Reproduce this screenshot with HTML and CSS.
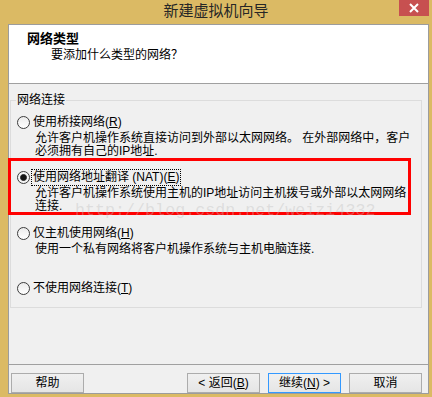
FILE: index.html
```html
<!DOCTYPE html>
<html lang="zh">
<head>
    <meta charset="UTF-8">
    <title>新建虚拟机向导</title>
    <link rel="stylesheet" href="styles.css">
</head>
<body>
    <div class="window">
        <div class="titlebar">
            <span></span>
            <div class="title">新建虚拟机向导</div>
            <div class="close">
                <svg width="10" height="10" viewBox="0 0 10 10">
                    <path d="M1 1 L9 9 M9 1 L1 9" stroke="#fff" stroke-width="2" fill="none"/>
                </svg>
            </div>
        </div>

        <div class="client">
            <div class="header">
                <h1>网络类型</h1>
                <p>要添加什么类型的网络？</p>
            </div>

            <div class="main">
                <fieldset class="group">
                    <legend>网络连接</legend>
                    <div class="options">
                        <div class="option">
                            <div class="opt-head">
                                <span class="radio"></span>
                                <span class="opt-label">使用桥接网络(<u>R</u>)</span>
                            </div>
                            <p class="opt-desc">允许客户机操作系统直接访问到外部以太网网络。 在外部网络中，客户<br>必须拥有自己的IP地址.</p>
                        </div>
                        <div class="option nat">
                            <div class="opt-head">
                                <span class="radio on"></span>
                                <span class="opt-label focus">使用网络地址翻译 (NAT)(<u>E</u>)</span>
                            </div>
                            <p class="opt-desc">允许客户机操作系统使用主机的IP地址访问主机拨号或外部以太网网络<br>连接.</p>
                        </div>
                        <div class="option">
                            <div class="opt-head">
                                <span class="radio"></span>
                                <span class="opt-label">仅主机使用网络(<u>H</u>)</span>
                            </div>
                            <p class="opt-desc">使用一个私有网络将客户机操作系统与主机电脑连接.</p>
                        </div>
                        <div class="option last">
                            <div class="opt-head">
                                <span class="radio"></span>
                                <span class="opt-label">不使用网络连接(<u>T</u>)</span>
                            </div>
                        </div>
                    </div>
                </fieldset>
            </div>

            <div class="footer">
                <button class="btn">帮助</button>
                <div class="btn-group">
                    <button class="btn">&lt; 返回(<u>B</u>)</button>
                    <button class="btn default">继续(<u>N</u>) &gt;</button>
                    <button class="btn">取消</button>
                </div>
            </div>
        </div>

        <!-- 标注框和水印 -->
        <div class="mark"></div>
        <div class="watermark">http://blog.csdn.net/weizi4332</div>
    </div>
</body>
</html>
```

FILE: styles.css
```css
/* 全局样式 */
body {
    margin: 0;
    font-family: 'Liberation Sans', 'Noto Sans CJK SC', sans-serif;
    font-size: 12px;
    color: #000;
}

/* 窗口 */
.window {
    position: relative;
    width: 432px;
    height: 397px;
    background-color: #dbba64;
    display: flex;
    flex-direction: column;
    overflow: hidden;
}

/* 标题栏 */
.titlebar {
    height: 25px;
    display: grid;
    grid-template-columns: 1fr auto 1fr;
    align-items: start;
}

.title {
    font-size: 15px;
    line-height: 21px;
    color: #262626;
}

.close {
    justify-self: end;
    margin-right: 3px;
    width: 30px;
    height: 16px;
    background-color: #c75050;
    display: flex;
    justify-content: center;
    align-items: center;
}

/* 客户区 */
.client {
    flex: 1;
    margin: 0 3px 3px 8px;
    border: 1px solid #9c9c9c;
    background-color: #f0f0f0;
    display: flex;
    flex-direction: column;
}

.header {
    height: 52px;
    background: #fff;
    border-bottom: 1px solid #a0a0a0;
    padding: 6px 0 0 18px;
    box-sizing: content-box;
}

.header h1 {
    margin: 0;
    font-size: 13px;
    line-height: 15px;
    font-weight: bold;
}

.header p {
    margin: 2px 0 0 24px;
    line-height: 14px;
}

.main {
    height: 280px;
}

/* 分组框 */
.group {
    margin: 9px 6px 0 1px;
    padding: 0 0 12px 0;
    border: 1px solid #dcdcdc;
    min-width: 0;
}

.group legend {
    margin-left: 5px;
    padding: 0 1px;
    line-height: 14px;
}

.options {
    padding: 9px 0 0 6px;
}

.option {
    height: 55px;
}

.option.nat {
    height: 56px;
}

.option.last {
    height: 13px;
}

.opt-head {
    display: flex;
    align-items: center;
    height: 13px;
}

.radio {
    width: 13px;
    height: 13px;
    box-sizing: border-box;
    border: 1px solid #3c3c3c;
    border-radius: 50%;
    background: linear-gradient(#ebebeb, #ffffff);
    margin-right: 3px;
    flex: none;
}

.radio.on {
    background: radial-gradient(circle, #151515 0 2.6px, #5a5a5a 3.2px, #f4f4f4 3.8px);
}

.opt-label {
    line-height: 13px;
    white-space: nowrap;
}

.opt-label.focus {
    outline: 1px dotted #000;
    outline-offset: 1px;
}

.opt-desc {
    margin: 3px 0 0 18px;
    line-height: 13px;
    white-space: nowrap;
}

/* 按钮区 */
.footer {
    flex: 1;
    border-top: 1px solid #a0a0a0;
    padding: 8px 6px 0 2px;
    display: flex;
    justify-content: space-between;
    align-items: flex-start;
}

.btn-group {
    display: flex;
    gap: 8px;
}

.btn {
    width: 73px;
    height: 20px;
    padding: 0;
    font-family: inherit;
    font-size: 12px;
    line-height: 18px;
    color: #000;
    border: 1px solid #acacac;
    background: linear-gradient(#f0f0f0, #e5e5e5);
}

.btn.default {
    border-color: #3399ff;
}

/* 红色标注框 */
.mark {
    position: absolute;
    left: 8px;
    top: 158px;
    width: 403px;
    height: 57px;
    box-sizing: border-box;
    border: 3px solid #ff0000;
}

/* 水印 */
.watermark {
    position: absolute;
    left: 75px;
    top: 202px;
    font-family: 'Liberation Mono', monospace;
    font-size: 16.7px;
    line-height: 17px;
    color: rgba(190, 190, 190, 0.38);
    white-space: nowrap;
}
```
